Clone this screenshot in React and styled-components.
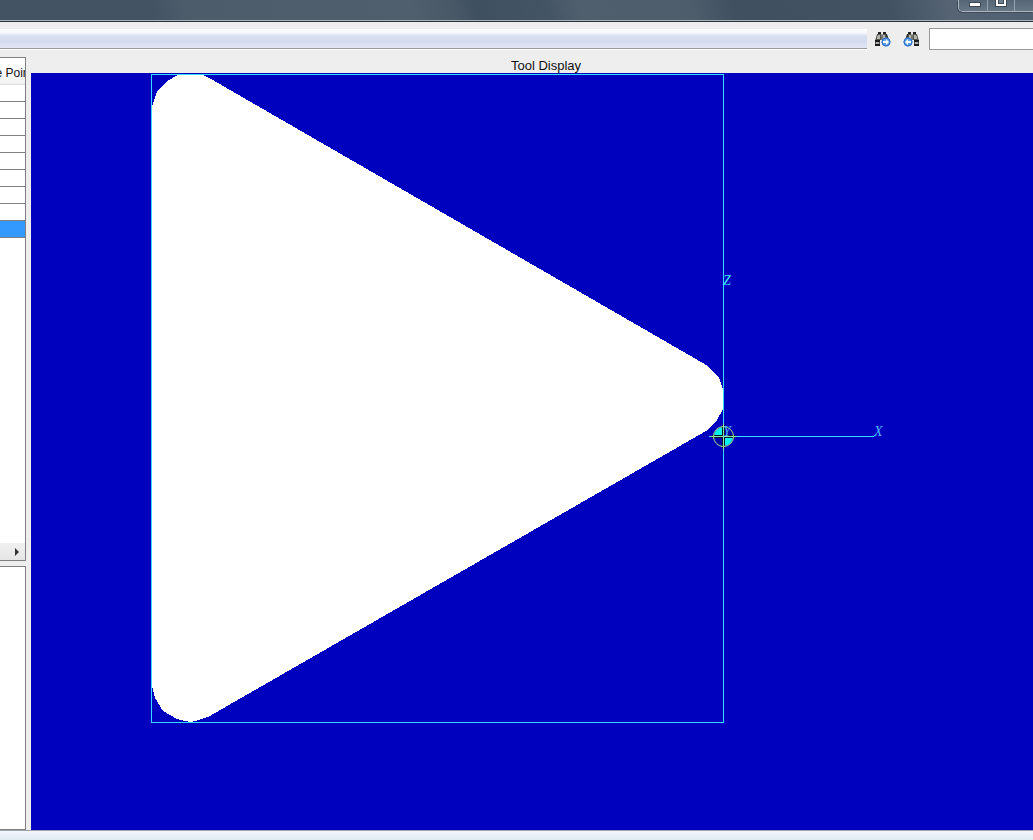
import React from 'react';
import styled, { createGlobalStyle } from 'styled-components';

const rows = [0, 1, 2, 3, 4, 5, 6, 7, 8];

const Binoculars = ({ back }) => (
    <svg width="18" height="16" viewBox="0 0 18 16" aria-hidden="true">
        <g transform={back ? 'translate(18 0) scale(-1 1)' : undefined}>
            <path d="M4 1h3v2H4zM9 1h3v2H9z" fill="#222" />
            <path d="M3 3h4l1 1 1-1h4l2 6v4h-5V9H6v5H1v-4z" fill="#55554f" />
            <path d="M4 4h2v4H3v-2zM9 4h2v4H9z" fill="#b5b5ae" />
            <path d="M7 4h2v5H7z" fill="#77766f" />
            <path d="M12 3l2 5" stroke="#222" />
            <path d="M1 10h5M1 14h5" stroke="#1c1c1c" strokeWidth="2" />
            <path d="M2 12h3" stroke="#aaa" strokeWidth="2" />
            <circle cx="12" cy="11" r="4.500" fill="#5f9fe8" />
            <circle cx="12" cy="11" r="4" fill="none" stroke="#2f6fc4" />
            <path d="M9 10h3V8l3 3-3 3v-2H9z" fill="#fff" />
        </g>
    </svg>
);

const ToolDrawing = () => (
    <Drawing role="img" aria-label="Triangular insert with X and Z axes">
        <polygon
            fill="#fff"
            shapeRendering="crispEdges"
            points="121,34 126,19 136,8 147,2 155,1 170,1 180,6 677,293 688,305 693,319 693,334 685,349 675,358 177,644 164,648 159,649 146,646 132,638 124,625 121,613"
        />
        <rect x="120.5" y="1.5" width="572" height="648" fill="none" stroke="#30dcff" />
        <path d="M678 363.5H843l2-2" fill="none" stroke="#30dcff" />
        <circle cx="692.5" cy="363.5" r="10" fill="#0000a8" />
        <path d="M692.5 363.5V354a9.5 9.5 0 0 0-9.5 9.5zM692.5 363.5V373a9.5 9.5 0 0 0 9.5-9.5z" fill="#00f4f4" />
        <path d="M692.5 352v23M681 363.5h23" stroke="#06142c" strokeWidth="3" />
        <path d="M692.5 350v27M679 363.5h27" stroke="#7fe8b0" />
        <circle cx="692.5" cy="363.5" r="10" fill="none" stroke="#a8e88a" />
        <AxisText x="692" y="363">Y</AxisText>
        <AxisText x="692" y="212" $bright>Z</AxisText>
        <AxisText x="843" y="363">X</AxisText>
    </Drawing>
);

const App = () => {
    return (
        <>
            <GlobalStyle />
            <Window>
                <TitleBar>
                    <WindowButtons>
                        <WindowButton aria-label="Minimize">
                            <svg width="12" height="11"><rect x="0.5" y="2.5" width="11" height="4" fill="#fff" stroke="#3b4856" /></svg>
                        </WindowButton>
                        <WindowButton aria-label="Maximize">
                            <svg width="12" height="11">
                                <path d="M0 0h12v7H0z" fill="#3b4856" />
                                <path d="M1 0h10v6H1z" fill="#fff" />
                                <path d="M3 0h6v4H3z" fill="#3b4856" />
                                <path d="M4 0h4v3H4z" fill="#71808e" />
                            </svg>
                        </WindowButton>
                        <WindowButton aria-label="Close" />
                    </WindowButtons>
                </TitleBar>
                <Toolbar>
                    <ToolStrip />
                    <IconButton aria-label="Find next"><Binoculars /></IconButton>
                    <IconButton aria-label="Find previous"><Binoculars back /></IconButton>
                    <SearchInput type="text" aria-label="Find" />
                </Toolbar>
                <Main>
                    <Side>
                        <ListPanel>
                            <Table>
                                <thead>
                                    <tr>
                                        <HeadCell><HeadText>e Poin</HeadText></HeadCell>
                                    </tr>
                                </thead>
                                <tbody>
                                    {rows.map((row) => (
                                        <tr key={row}><Cell $selected={row === 8} /></tr>
                                    ))}
                                </tbody>
                            </Table>
                            <ScrollButton aria-label="Scroll right">
                                <svg width="4" height="8"><path d="M0 0l4 4-4 4z" fill="#333" /></svg>
                            </ScrollButton>
                        </ListPanel>
                        <LowerPanel />
                    </Side>
                    <Display>
                        <DisplayTitle>Tool Display</DisplayTitle>
                        <Canvas><ToolDrawing /></Canvas>
                    </Display>
                </Main>
                <StatusBar />
            </Window>
        </>
    );
};

export default App;

const GlobalStyle = createGlobalStyle`
    * {
        box-sizing: border-box;
    }
    body {
        margin: 0;
        font-family: "Liberation Sans", Arial, sans-serif;
        font-size: 12px;
        color: #111;
        overflow: hidden;
    }
    button {
        padding: 0;
        border: 0;
        background: none;
    }
`;
const Window = styled.div`
    display: flex;
    flex-direction: column;
    height: 100vh;
    background: #eee;
`;
const TitleBar = styled.header`
    display: flex;
    justify-content: flex-end;
    flex-shrink: 0;
    height: 22px;
    background: linear-gradient(75deg, #435364 0%, #435364 15%, #4c5c6b 18%, #4f5f6e 40%, #485867 44%, #3f5061 46%, #435465 53%, #505f6e 56%, #4d5d6c 67%, #405060 71%, #425263 86%, #566474 92%, #506071 100%);
    border-bottom: 1px solid #29323d;
    box-shadow: inset 0 -1px #aab0b8;
`;
const WindowButtons = styled.div`
    display: flex;
    width: 75px;
    height: 12px;
    border: 1px solid #aab5bf;
    border-width: 0 0 1px 1px;
    border-bottom-left-radius: 5px;
    box-shadow: -1px 1px #3f4c5a;
`;
const WindowButton = styled.button`
    display: flex;
    justify-content: center;
    align-items: flex-start;
    width: 29px;
    height: 11px;
    background: linear-gradient(#566676, #687786);
    border-right: 1px solid #95a1ac;
    &:first-child {
        padding-left: 3px;
        border-bottom-left-radius: 4px;
    }
    &:nth-child(2) {
        width: 27px;
    }
    &:last-child {
        flex: 1;
        border-right: 0;
    }
`;
const Toolbar = styled.div`
    display: flex;
    align-items: center;
    flex-shrink: 0;
    height: 35px;
    padding-bottom: 1px;
`;
const ToolStrip = styled.div`
    flex: 1;
    height: 20px;
    margin-right: 2px;
    background: linear-gradient(#fff 0%, #f4f6fc 20%, #d7def0 38%, #d4dbef 65%, #e2e6f6 100%);
    border-bottom: 1px solid #999;
    box-shadow: 0 1px #fff;
`;
const IconButton = styled.button`
    display: flex;
    align-items: center;
    justify-content: center;
    width: 28px;
    height: 24px;
`;
const SearchInput = styled.input`
    width: 106px;
    height: 22px;
    margin-left: 4px;
    margin-right: -2px;
    padding: 0 4px;
    border: 1px solid #999;
    background: #fff;
`;
const Main = styled.main`
    display: flex;
    flex: 1;
    min-height: 0;
`;
const Side = styled.aside`
    display: flex;
    flex-direction: column;
    width: 26px;
    margin-right: 5px;
    overflow: hidden;
`;
const ListPanel = styled.section`
    display: flex;
    flex-direction: column;
    justify-content: space-between;
    height: 504px;
    background: #fff;
    border: 1px solid #808080;
    border-left: 0;
`;
const Table = styled.table`
    width: 100%;
    table-layout: fixed;
    border-collapse: separate;
    border-spacing: 0;
`;
const HeadCell = styled.th`
    height: 27px;
    padding: 0;
    font-weight: 400;
    background: linear-gradient(#fff 40%, #f1f1f1);
    border-bottom: 1px solid #ddd;
`;
const HeadText = styled.div`
    display: flex;
    justify-content: center;
    padding-top: 4px;
    white-space: nowrap;
    overflow: hidden;
`;
const Cell = styled.td`
    height: 17px;
    padding: 0;
    background: ${(props) => (props.$selected ? '#3399ff' : '#fff')};
    border-bottom: 1px solid #808080;
`;
const ScrollButton = styled.button`
    display: flex;
    align-items: center;
    justify-content: flex-end;
    width: 100%;
    height: 17px;
    padding-right: 6px;
    background: linear-gradient(#f0f0f0, #e6e6e6);
`;
const LowerPanel = styled.section`
    flex: 1;
    margin-top: 5px;
    background: #fff;
    border: 1px solid #808080;
    border-left: 0;
`;
const Display = styled.section`
    display: flex;
    flex-direction: column;
    flex: 1;
    min-width: 0;
`;
const DisplayTitle = styled.h1`
    margin: 0;
    padding-top: 1px;
    padding-left: 28px;
    font-size: 13px;
    font-weight: 400;
    line-height: 15px;
    text-align: center;
`;
const Canvas = styled.div`
    flex: 1;
    min-height: 0;
    background: #0000bf;
`;
const Drawing = styled.svg`
    display: block;
    width: 100%;
    height: 100%;
`;
const AxisText = styled.text`
    font-family: "Liberation Serif", serif;
    font-size: 14px;
    font-style: italic;
    fill: ${(props) => (props.$bright ? '#3fe0ff' : '#4fb4ff')};
`;
const StatusBar = styled.footer`
    flex-shrink: 0;
    height: 10px;
    background: linear-gradient(#f3f7fb, #dfe8f0);
    border-top: 1px solid #a0a4aa;
`;
